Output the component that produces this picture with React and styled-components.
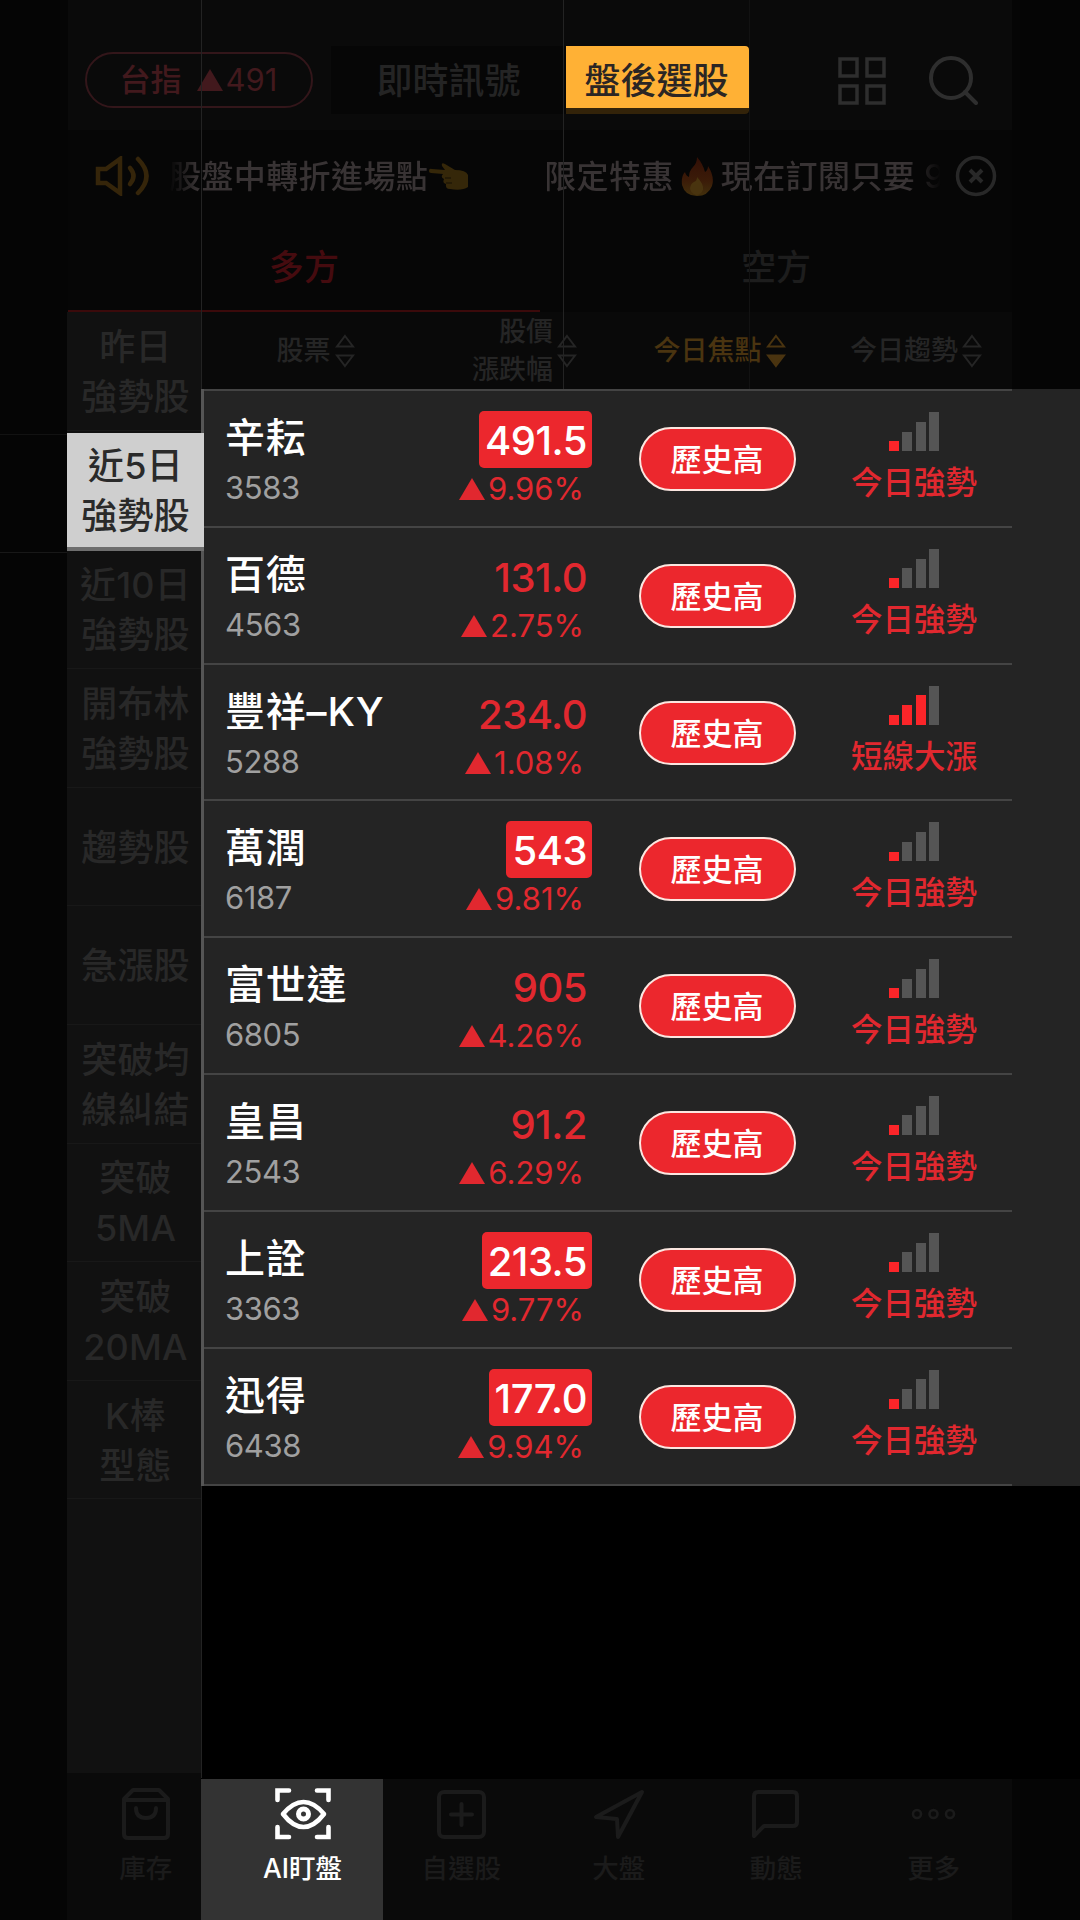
import React from 'react';
import styled, { createGlobalStyle } from 'styled-components';

const GlobalStyle = createGlobalStyle`
  * {
    box-sizing: border-box;
  }

  body {
    margin: 0;
    background: #000;
    font-family: Inter, "Noto Sans CJK TC", sans-serif;
  }
`;

const Screen = styled.div`
  position: relative;
  display: flex;
  flex-direction: column;
  width: 1080px;
  height: 1920px;
  overflow: hidden;
  background: #050505;
`;

const TopBar = styled.header`
  display: flex;
  align-items: flex-start;
  height: 130px;
  margin: 0 68px;
  padding: 46px 34px 0 17px;
  background: #0a0a0a;
`;

const IndexPill = styled.div`
  display: flex;
  align-items: center;
  justify-content: center;
  width: 228px;
  height: 56px;
  margin-top: 6px;
  padding-right: 1px;
  border: 2px solid #33161a;
  border-radius: 28px;
  color: #42191d;
  font-size: 31px;
  font-weight: 500;
  line-height: 40px;
`;

const IndexName = styled.span`
  margin-right: 15px;
`;

const IndexValue = styled.span`
  margin-left: 3px;
  font-weight: 400;
`;

const Segment = styled.div`
  display: flex;
  width: 418px;
  height: 68px;
  margin-left: 18px;
  background: #060606;
`;

const SegmentButton = styled.div`
  flex: 1;
  height: 68px;
  font-size: 36px;
  font-weight: 500;
  line-height: 70px;
  text-align: center;
  color: #242424;
`;

const SegmentButtonActive = styled(SegmentButton)`
  flex: 0 0 183px;
  padding-right: 2px;
  border-bottom: 6px solid #332309;
  border-radius: 0 4px 4px 0;
  background: #ffb135;
  color: #2b2624;
`;

const TopIcons = styled.div`
  display: flex;
  flex: 1;
  justify-content: flex-end;
  gap: 43px;
  margin-top: 10px;
`;

const Ticker = styled.div`
  display: flex;
  align-items: center;
  height: 92px;
  margin: 0 68px;
  padding: 0 15px 0 27px;
  background: #060606;
`;

const TickerText = styled.div`
  display: flex;
  flex: 1;
  align-items: center;
  height: 60px;
  margin: 0 14px 0 20px;
  padding-top: 1px;
  overflow: hidden;
  color: #383334;
  font-size: 32px;
  font-weight: 500;
  letter-spacing: 0.4px;
  line-height: 60px;
  white-space: nowrap;
  mask-image: linear-gradient(90deg, transparent 0, #000 28px, #000 742px, transparent 772px);

  svg {
    flex: none;
  }
`;

const TickerOffer = styled.div`
  display: flex;
  align-items: center;
  gap: 7px;
  margin-left: 74px;
`;

const Tabs = styled.nav`
  display: flex;
  height: 90px;
  margin: 0 68px;
  background: #060606;
`;

const Tab = styled.div`
  flex: 1;
  border-bottom: 2px solid ${({ $active }) => ($active ? '#3b0a0b' : '#060606')};
  color: ${({ $active }) => ($active ? '#450b0f' : '#1d1d1d')};
  font-size: 35px;
  font-weight: 500;
  line-height: 91px;
  text-align: center;
`;

const Body = styled.main`
  display: flex;
  height: 1467px;
  padding-left: 67px;
`;

const Sidebar = styled.aside`
  width: 134px;
  border-bottom: 6px solid #0a0a0a;
  background: #111;
`;

const SidebarItem = styled.div`
  display: flex;
  align-items: center;
  justify-content: center;
  height: 118.6px;
  padding: 2px 0 0 3px;
  border-bottom: 1px solid #181818;
  color: #282828;
  font-size: 36px;
  font-weight: 500;
  letter-spacing: 0.2px;
  line-height: 50px;
  text-align: center;
  white-space: pre-line;
`;

const SidebarItemActive = styled(SidebarItem)`
  position: relative;
  z-index: 1;
  margin: 2px -3px 0 0;
  padding-right: 3px;
  height: 118px;
  border-bottom: 4px solid #6e6e6e;
  background: #cfcfcf;
  color: #2a2a2a;
`;

const Main = styled.section`
  display: flex;
  flex: 1;
  flex-direction: column;
  background: #000;
`;

const HeaderRow = styled.div`
  display: grid;
  grid-template-columns: 224px 164px 256px 137px;
  align-items: center;
  height: 77px;
  padding-left: 3px;
  background: linear-gradient(90deg, #090909 811px, #050505 811px);
`;

const HeaderCell = styled.div`
  display: flex;
  align-items: center;
  justify-content: ${({ $end }) => ($end ? 'flex-end' : 'center')};
  gap: 4px;
  padding-right: ${({ $end }) => ($end ? '15px' : '1px')};
  color: ${({ $active }) => ($active ? '#4a3410' : '#252525')};
  font-size: 27px;
  font-weight: 500;
  line-height: 38px;
  text-align: right;
  white-space: pre-line;
`;

const StockList = styled.div`
  height: 1097px;
  padding-right: 68px;
  border-left: 3px solid #555;
  background: #242424;
`;

const StockRow = styled.div`
  display: grid;
  grid-template-columns: 216px 172px 251px 142px;
  height: 136.8px;
  border-top: 2px solid #444;

  &:last-child {
    height: 139px;
    border-bottom: 2px solid #444;
  }
`;

const NameCell = styled.div`
  padding: 18px 0 0 21px;
`;

const StockName = styled.div`
  color: #fff;
  font-size: 40px;
  font-weight: 500;
  letter-spacing: 0.8px;
  line-height: 57px;
  white-space: nowrap;
`;

const StockCode = styled.div`
  color: #a0a0a0;
  font-size: 31px;
  letter-spacing: -0.4px;
  line-height: 43px;
`;

const PriceCell = styled.div`
  display: flex;
  flex-direction: column;
  align-items: flex-end;
  padding-top: 20px;
`;

const Price = styled.div`
  height: 57px;
  padding: 0 5px 0 6px;
  border-radius: 5px;
  background: ${({ $limit }) => ($limit ? '#ec272d' : 'transparent')};
  color: ${({ $limit }) => ($limit ? '#fff' : '#e1282f')};
  font-size: 40px;
  font-weight: 450;
  letter-spacing: -0.5px;
  line-height: 60px;
`;

const Change = styled.div`
  display: flex;
  align-items: center;
  gap: 3px;
  padding-right: 8px;
  color: #e1282f;
  font-size: 31px;
  line-height: 42px;
`;

const Badge = styled.div`
  align-self: start;
  justify-self: center;
  width: 157px;
  height: 64px;
  margin-top: 36px;
  padding-right: 1px;
  border: 2px solid #fbe6e0;
  border-radius: 32px;
  background: #ec272d;
  color: #fff;
  font-size: 31px;
  font-weight: 500;
  line-height: 61px;
  text-align: center;
`;

const TrendCell = styled.div`
  display: flex;
  flex-direction: column;
  align-items: center;
  padding-top: 21px;
`;

const Bars = styled.div`
  display: flex;
  align-items: flex-end;
  gap: 3.5px;
  height: 39px;
`;

const Bar = styled.div`
  width: 10px;
  height: ${({ $level }) => $level * 9.75}px;
  background: ${({ $on }) => ($on ? '#fb2529' : '#555')};
`;

const TrendLabel = styled.div`
  margin-top: 11px;
  color: #e1282f;
  font-size: 31.5px;
  font-weight: 500;
  line-height: 42px;
  white-space: nowrap;
`;

const BottomNav = styled.nav`
  display: flex;
  height: 141px;
  margin: 0 68px 0 67px;
  background: #0a0a0a;
`;

const NavItem = styled.div`
  display: flex;
  flex: 0 0 157.5px;
  flex-direction: column;
  align-items: center;
  padding-top: 6px;
  color: #1b1b1b;
  font-size: 26.5px;
  font-weight: 500;
  line-height: 36px;
`;

// The highlight reaches back to the edge of the sidebar.
const NavItemActive = styled(NavItem)`
  flex-basis: 182px;
  margin-left: -24px;
  padding-left: 22px;
  background: #333;
  color: #fff;
`;

const NavLabel = styled.div`
  margin-top: 7px;
`;

const GuideLine = styled.div`
  position: absolute;
  top: ${({ $y }) => $y || 0}px;
  left: ${({ $x }) => $x || 0}px;
  width: ${({ $width }) => $width || 1}px;
  height: ${({ $height }) => $height || 1}px;
  background: ${({ $color }) => $color || '#232323'};
`;

const Triangle = ({ width = 26, height = 22 }) => (
  <svg width={width} height={height} viewBox="0 0 26 22">
    <path d="M13 0L26 22H0z" fill="currentColor" />
  </svg>
);

const SortIcon = ({ down }) => (
  <svg width="20" height="36" viewBox="0 0 20 36" fill="none" stroke="currentColor" strokeWidth="2">
    <path d="M10 3L18 13.5H2z" />
    <path d="M10 33L18 22.5H2z" fill={down ? 'currentColor' : 'none'} />
  </svg>
);

const GridIcon = () => (
  <svg width="49" height="49" viewBox="0 0 49 49" fill="none" stroke="#2e2e2e" strokeWidth="3.5">
    <rect x="3" y="3" width="17" height="17" />
    <rect x="30" y="3" width="17" height="17" />
    <rect x="3" y="30" width="17" height="17" />
    <rect x="30" y="30" width="17" height="17" />
  </svg>
);

const SearchIcon = () => (
  <svg width="49" height="49" viewBox="0 0 49 49" fill="none" stroke="#2e2e2e" strokeWidth="4" strokeLinecap="round">
    <circle cx="22" cy="22" r="20" />
    <path d="M36 36L47 47" />
  </svg>
);

const SpeakerIcon = () => (
  <svg width="54" height="40" viewBox="0 0 54 40" fill="none" stroke="#35250a" strokeWidth="4.5">
    <path d="M3 13H11L25 3V37L11 27H3z" />
    <path d="M35 12Q42 20 35 28" strokeLinecap="round" />
    <path d="M43 3Q60 20 43 37" strokeLinecap="round" />
  </svg>
);

const HandIcon = () => (
  <svg width="42" height="30" viewBox="0 0 42 30">
    <path
      d="M1 9Q1 6 4 7L17 8L14 4Q13 0 17 2L27 8Q38 8 40 13V25Q34 29 22 27Q17 27 18 22Q14 21 16 17Q12 15 15 12L3 11Q1 11 1 9z"
      fill="#352709"
    />
    <path d="M17 16H23M18 21H24" stroke="#211806" strokeWidth="1.5" />
  </svg>
);

const FireIcon = () => (
  <svg width="33" height="40" viewBox="0 0 33 40">
    <defs>
      <linearGradient id="fire" x1="0" y1="0" x2="0" y2="1">
        <stop offset="0" stopColor="#320f06" />
        <stop offset="0.6" stopColor="#3b1b08" />
        <stop offset="1" stopColor="#42300c" />
      </linearGradient>
    </defs>
    <path
      d="M16 0Q22 7 24 15Q27 13 27 9Q34 20 31 29Q27 39 16 39Q4 39 1 28Q0 19 4 15Q5 19 8 20Q8 14 12 10Q16 6 16 0z"
      fill="url(#fire)"
    />
    <path d="M16 20Q23 27 22 33Q20 38 15 38Q9 36 9 31Q10 26 13 25Q16 24 16 20z" fill="#49340f" />
  </svg>
);

const CloseIcon = () => (
  <svg width="42" height="42" viewBox="0 0 42 42" fill="none" stroke="#282828" strokeWidth="3.5">
    <circle cx="21" cy="21" r="18.5" />
    <path d="M15 15L27 27M27 15L15 27" strokeWidth="4" />
  </svg>
);

const NavIcon = ({ children, width = 4 }) => (
  <svg
    width="58"
    height="58"
    viewBox="0 0 58 58"
    fill="none"
    stroke="currentColor"
    strokeWidth={width}
    strokeLinecap="round"
    strokeLinejoin="round"
  >
    {children}
  </svg>
);

const NAV_ICONS = {
  bag: (
    <NavIcon>
      <path d="M7 14V49Q7 53 11 53H47Q51 53 51 49V14L42 5H16z" />
      <path d="M7 15H51M19 23Q19 33 29 33Q39 33 39 23" />
    </NavIcon>
  ),
  eye: (
    <NavIcon width={4.6}>
      <path d="M3.5 15V5.500H15M43 5.500H54.500V15M3.500 42V52H15M43 52H54.500V42" strokeLinejoin="miter" />
      <path d="M9 29Q19 17 29.500 17Q40 17 50 29Q40 42 29.500 42Q19 42 9 29z" />
      <circle cx="29.500" cy="29" r="5" strokeWidth="5" />
    </NavIcon>
  ),
  plus: (
    <NavIcon>
      <rect x="7" y="7" width="45" height="45" rx="5" />
      <path d="M29.500 19V40M19 29.500H40" />
    </NavIcon>
  ),
  arrow: (
    <NavIcon>
      <path d="M52 7L6 32L27 34L28 52z" />
    </NavIcon>
  ),
  chat: (
    <NavIcon>
      <path d="M7 51V11Q7 7 11 7H46Q50 7 50 11V37Q50 41 46 41H17z" />
    </NavIcon>
  ),
  more: (
    <NavIcon width={2.6}>
      <circle cx="12" cy="29" r="4" />
      <circle cx="28.500" cy="29" r="4" />
      <circle cx="45" cy="29" r="4" />
    </NavIcon>
  ),
};

const CATEGORIES = [
  '昨日\n強勢股',
  '近5日\n強勢股',
  '近10日\n強勢股',
  '開布林\n強勢股',
  '趨勢股',
  '急漲股',
  '突破均\n線糾結',
  '突破\n5MA',
  '突破\n20MA',
  'K棒\n型態',
];

const ACTIVE_CATEGORY = 1;

const STOCKS = [
  { name: '辛耘', code: '3583', price: '491.5', change: '9.96%', limit: true, level: 1, trend: '今日強勢' },
  { name: '百德', code: '4563', price: '131.0', change: '2.75%', limit: false, level: 1, trend: '今日強勢' },
  { name: '豐祥–KY', code: '5288', price: '234.0', change: '1.08%', limit: false, level: 3, trend: '短線大漲' },
  { name: '萬潤', code: '6187', price: '543', change: '9.81%', limit: true, level: 1, trend: '今日強勢' },
  { name: '富世達', code: '6805', price: '905', change: '4.26%', limit: false, level: 1, trend: '今日強勢' },
  { name: '皇昌', code: '2543', price: '91.2', change: '6.29%', limit: false, level: 1, trend: '今日強勢' },
  { name: '上詮', code: '3363', price: '213.5', change: '9.77%', limit: true, level: 1, trend: '今日強勢' },
  { name: '迅得', code: '6438', price: '177.0', change: '9.94%', limit: true, level: 1, trend: '今日強勢' },
];

const NAV_ITEMS = [
  { label: '庫存', icon: 'bag' },
  { label: 'AI盯盤', icon: 'eye', active: true },
  { label: '自選股', icon: 'plus' },
  { label: '大盤', icon: 'arrow' },
  { label: '動態', icon: 'chat' },
  { label: '更多', icon: 'more' },
];

const Stock = ({ stock }) => (
  <StockRow>
    <NameCell>
      <StockName>{stock.name}</StockName>
      <StockCode>{stock.code}</StockCode>
    </NameCell>
    <PriceCell>
      <Price $limit={stock.limit}>{stock.price}</Price>
      <Change>
        <Triangle />
        {stock.change}
      </Change>
    </PriceCell>
    <Badge>歷史高</Badge>
    <TrendCell>
      <Bars>
        {[1, 2, 3, 4].map((level) => (
          <Bar key={level} $level={level} $on={level <= stock.level} />
        ))}
      </Bars>
      <TrendLabel>{stock.trend}</TrendLabel>
    </TrendCell>
  </StockRow>
);

const App = () => (
  <Screen>
    <GlobalStyle />
    <TopBar>
      <IndexPill>
        <IndexName>台指</IndexName>
        <Triangle />
        <IndexValue>491</IndexValue>
      </IndexPill>
      <Segment>
        <SegmentButton>即時訊號</SegmentButton>
        <SegmentButtonActive>盤後選股</SegmentButtonActive>
      </Segment>
      <TopIcons>
        <GridIcon />
        <SearchIcon />
      </TopIcons>
    </TopBar>

    <Ticker>
      <SpeakerIcon />
      <TickerText>
        股盤中轉折進場點
        <HandIcon />
        <TickerOffer>
          <span>限定特惠</span>
          <FireIcon />
          <span>現在訂閱只要 9</span>
        </TickerOffer>
      </TickerText>
      <CloseIcon />
    </Ticker>

    <Tabs>
      <Tab $active>多方</Tab>
      <Tab>空方</Tab>
    </Tabs>

    <Body>
      <Sidebar>
        {CATEGORIES.map((category, index) => {
          const Item = index === ACTIVE_CATEGORY ? SidebarItemActive : SidebarItem;
          return <Item key={category}>{category}</Item>;
        })}
      </Sidebar>
      <Main>
        <HeaderRow>
          <HeaderCell>
            股票
            <SortIcon />
          </HeaderCell>
          <HeaderCell $end>
            {'股價\n漲跌幅'}
            <SortIcon />
          </HeaderCell>
          <HeaderCell $active>
            今日焦點
            <SortIcon down />
          </HeaderCell>
          <HeaderCell>
            今日趨勢
            <SortIcon />
          </HeaderCell>
        </HeaderRow>
        <StockList>
          {STOCKS.map((stock) => (
            <Stock key={stock.code} stock={stock} />
          ))}
        </StockList>
      </Main>
    </Body>

    <BottomNav>
      {NAV_ITEMS.map(({ label, icon, active }) => {
        const Item = active ? NavItemActive : NavItem;
        return (
          <Item key={label}>
            {NAV_ICONS[icon]}
            <NavLabel>{label}</NavLabel>
          </Item>
        );
      })}
    </BottomNav>

    <GuideLine $x={201} $height={389} />
    <GuideLine $x={201} $y={1486} $height={292} />
    <GuideLine $x={563} $height={389} />
    <GuideLine $x={749} $height={389} $color="#121212" />
    <GuideLine $y={434} $width={67} $color="#121212" />
    <GuideLine $y={552} $width={67} $color="#181818" />
  </Screen>
);

export default App;
